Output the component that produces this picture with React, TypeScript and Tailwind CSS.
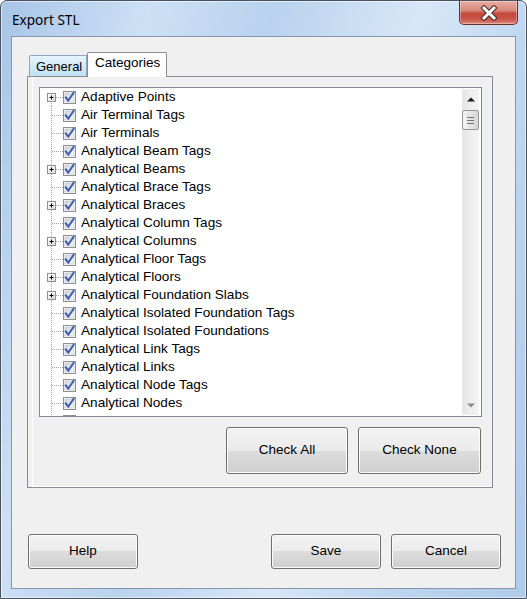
import React from "react";

const items: [string, boolean][] = [
  ["Adaptive Points", true],
  ["Air Terminal Tags", false],
  ["Air Terminals", false],
  ["Analytical Beam Tags", false],
  ["Analytical Beams", true],
  ["Analytical Brace Tags", false],
  ["Analytical Braces", true],
  ["Analytical Column Tags", false],
  ["Analytical Columns", true],
  ["Analytical Floor Tags", false],
  ["Analytical Floors", true],
  ["Analytical Foundation Slabs", true],
  ["Analytical Isolated Foundation Tags", false],
  ["Analytical Isolated Foundations", false],
  ["Analytical Link Tags", false],
  ["Analytical Links", false],
  ["Analytical Node Tags", false],
  ["Analytical Nodes", false],
  ["", false],
];

// tree connector lines + expand box
function Connector({ expand, first }: { expand: boolean; first: boolean }) {
  return (
    <svg width="23" height="18" viewBox="0 0 23 18" className="shrink-0">
      <line
        x1="11.5"
        y1={first ? 13 : 0}
        x2="11.5"
        y2="18"
        stroke="#a0a0a0"
        strokeDasharray="1 1"
      />
      <line x1={expand ? 16 : 12} y1="9.5" x2="23" y2="9.5" stroke="#a0a0a0" strokeDasharray="1 1" />
      {expand && (
        <>
          <defs>
            <linearGradient id="pbox" x1="0" y1="0" x2="1" y2="1">
              <stop offset="0" stopColor="#ffffff" />
              <stop offset="1" stopColor="#d8d8d8" />
            </linearGradient>
          </defs>
          <rect x="7.5" y="5.5" width="8" height="8" fill="url(#pbox)" stroke="#919191" />
          <line x1="9.5" y1="9.5" x2="13.5" y2="9.5" stroke="#000" />
          <line x1="11.5" y1="7.5" x2="11.5" y2="11.5" stroke="#000" />
        </>
      )}
    </svg>
  );
}

function Check() {
  return (
    <svg width="13" height="13" viewBox="0 0 13 13" className="shrink-0">
      <defs>
        <linearGradient id="cbg" x1="0" y1="0" x2="1" y2="1">
          <stop offset="0" stopColor="#d4d6d9" />
          <stop offset="1" stopColor="#f9f9f9" />
        </linearGradient>
      </defs>
      <rect x="0.5" y="0.5" width="12" height="12" fill="#fff" stroke="#8e8f8f" />
      <rect x="2" y="2" width="9" height="9" fill="url(#cbg)" stroke="#b4b8be" strokeWidth="0.6" />
      <path d="M2.8 6.4 L5.3 9.6 L10.6 1.8" fill="none" stroke="#3a5fb0" strokeWidth="2" strokeLinecap="square" />
    </svg>
  );
}

function WinButton({ label, className }: { label: string; className: string }) {
  return (
    <button
      className={
        "rounded-[3px] border border-[#707070] bg-[linear-gradient(#f2f2f2_0%,#ebebeb_50%,#dddddd_50%,#cfcfcf_100%)] shadow-[inset_0_0_0_1px_#fbfbfb] text-[13.5px] text-black " +
        className
      }
    >
      {label}
    </button>
  );
}

export default function App() {
  return (
    <div className="w-[527px] h-[599px] flex flex-col px-[10px] pb-[9px] rounded-t-[7px] border border-[#4a5260] bg-[linear-gradient(105deg,#a7c5e8_0%,#cde0f5_22%,#b9d2ee_40%,#d8e7f7_62%,#bdd5ef_80%,#aecbea_100%)] shadow-[inset_0_0_0_1px_rgba(255,255,255,0.55)] font-['Liberation_Sans',Arial,sans-serif] overflow-hidden">
      {/* title bar */}
      <div className="h-[35px] flex items-start justify-between shrink-0">
        <span className="mt-[10px] ml-[1px] leading-[18px] text-[13.6px] text-black font-['Noto_Sans',sans-serif]">
          Export STL
        </span>
        <div className="-mr-[2px] mt-0 w-[59px] h-[24px] rounded-b-[5px] border border-t-0 border-[#6b2f2a] bg-[linear-gradient(#e9aea4_0%,#d88a7d_40%,#c5473a_55%,#c9564a_80%,#dc8a7c_100%)] shadow-[inset_0_0_0_1px_rgba(255,255,255,0.35)] flex items-center justify-center">
          <svg width="20" height="16" viewBox="0 0 20 16">
            <path d="M5 3 L15 13 M15 3 L5 13" stroke="#4a2a28" strokeWidth="5" strokeLinecap="square" />
            <path d="M5 3 L15 13 M15 3 L5 13" stroke="#ffffff" strokeWidth="3" strokeLinecap="square" />
          </svg>
        </div>
      </div>

      {/* client area */}
      <div className="flex-1 flex flex-col bg-[#f0f0f0] border border-[#8797ab]">
        <div className="pt-[15px] pl-[15px] pr-[22px]">
          {/* tabs */}
          <div className="flex items-end h-[24px] pl-[2px] relative z-10">
            <div className="h-[21px] w-[58px] pl-[6px] border border-b-0 border-[#8ea6c2] rounded-tl-[2px] bg-[linear-gradient(#e6f4fc,#bfe1f5)] text-[13px] leading-[21px] text-black">
              General
            </div>
            <div className="h-[25px] w-[80px] -mb-px pl-[7px] border border-b-0 border-[#898c95] rounded-t-[2px] bg-white text-[13.5px] leading-[20px] text-black">
              Categories
            </div>
          </div>

          {/* tab panel */}
          <div className="h-[412px] border border-[#898c95] bg-[#f0f0f0] flex">
            <div className="flex-1 ml-[4px] border-l border-b border-white flex flex-col pl-[6px] pr-[10px] pt-[10px]">
              {/* tree */}
              <div className="h-[330px] bg-white border border-[#828790] flex overflow-hidden">
                <div className="flex-1 overflow-hidden">
                  {items.map(([name, expand], i) => (
                    <div key={i} className="h-[18px] flex items-center">
                      <Connector expand={expand} first={i === 0} />
                      <Check />
                      {name && (
                        <span className="ml-[5px] text-[13.6px] leading-[18px] text-black whitespace-nowrap">{name}</span>
                      )}
                    </div>
                  ))}
                </div>
                {/* scrollbar */}
                <div className="w-[17px] mr-[2px] my-[1px] flex flex-col bg-[linear-gradient(90deg,#e6e6e6,#f4f4f4)]">
                  <div className="h-[20px] flex items-center justify-center">
                    <svg width="8" height="5" viewBox="0 0 8 5">
                      <path d="M0 4.5 L4 0.5 L8 4.5 Z" fill="#1a1a1a" />
                    </svg>
                  </div>
                  <div className="mt-[1px] h-[20px] rounded-[2px] border border-[#969696] bg-[linear-gradient(90deg,#f4f4f4,#e4e4e4_50%,#d6d6d6)] flex flex-col items-center justify-center gap-[2px]">
                    <div className="w-[7px] h-px bg-[#6f6f6f]" />
                    <div className="w-[7px] h-px bg-[#6f6f6f]" />
                    <div className="w-[7px] h-px bg-[#6f6f6f]" />
                  </div>
                  <div className="flex-1" />
                  <div className="h-[20px] flex items-center justify-center">
                    <svg width="8" height="5" viewBox="0 0 8 5">
                      <path d="M0 0.5 L4 4.5 L8 0.5 Z" fill="#8a8a8a" />
                    </svg>
                  </div>
                </div>
              </div>

              {/* check buttons */}
              <div className="mt-[10px] flex justify-end gap-[10px] pr-[1px]">
                <WinButton label="Check All" className="w-[122px] h-[47px]" />
                <WinButton label="Check None" className="w-[123px] h-[47px]" />
              </div>
            </div>
          </div>
        </div>

        {/* bottom buttons */}
        <div className="mt-[46px] flex pl-[16px] pr-[14px]">
          <WinButton label="Help" className="w-[110px] h-[35px]" />
          <div className="flex-1" />
          <div className="flex gap-[10px]">
            <WinButton label="Save" className="w-[110px] h-[35px]" />
            <WinButton label="Cancel" className="w-[110px] h-[35px]" />
          </div>
        </div>
      </div>
    </div>
  );
}
